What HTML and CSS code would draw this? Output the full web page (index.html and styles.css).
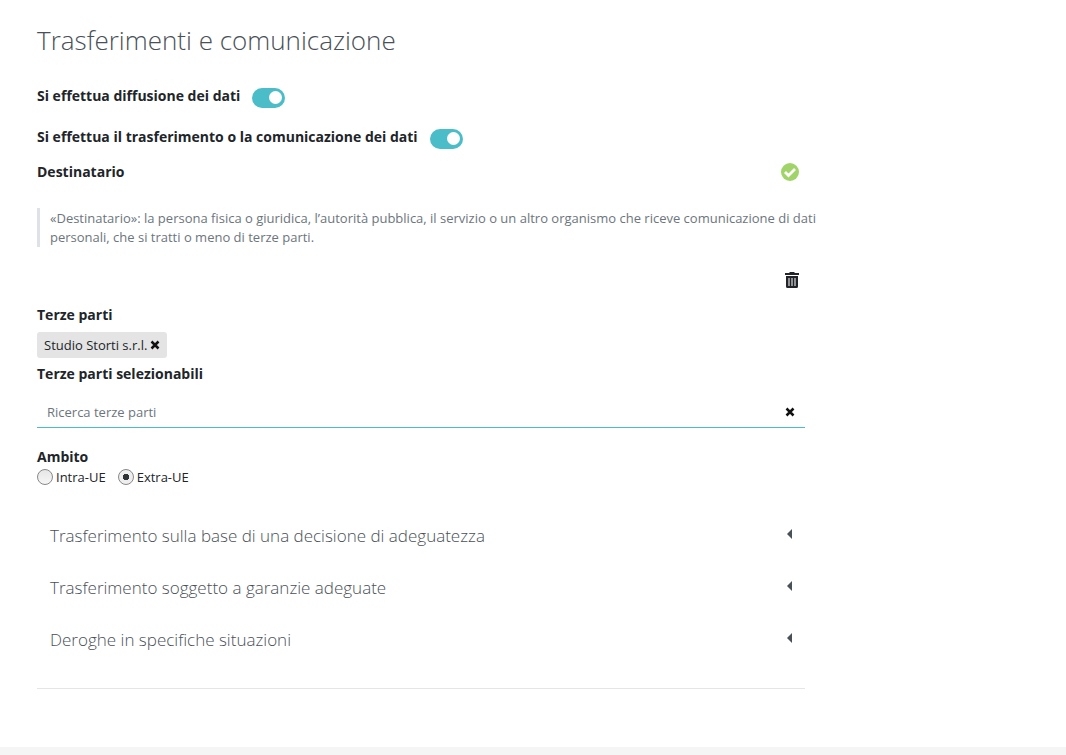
FILE: index.html
```html
<!DOCTYPE html>
<html lang="it">
<head>
    <meta charset="UTF-8">
    <meta name="viewport" content="width=device-width, initial-scale=1.0">
    <title>Trasferimenti e comunicazione</title>
    <link rel="stylesheet" href="styles.css">
</head>
<body>
    <main class="page">
        <form class="content">
            <h1>Trasferimenti e comunicazione</h1>

            <div class="switch-row">
                <label for="diffusione">Si effettua diffusione dei dati</label>
                <input type="checkbox" class="switch" id="diffusione" checked>
            </div>
            <div class="switch-row">
                <label for="trasferimento">Si effettua il trasferimento o la comunicazione dei dati</label>
                <input type="checkbox" class="switch" id="trasferimento" checked>
            </div>

            <!-- Destinatario -->
            <div class="section-head">
                <h2>Destinatario</h2>
                <svg class="icon-ok" viewBox="0 0 18 18" aria-hidden="true"><circle cx="9" cy="9" r="9"/><path d="M4 9l3.500 3.500 6.500-6.500"/></svg>
            </div>
            <blockquote>«Destinatario»: la persona fisica o giuridica, l’autorità pubblica, il servizio o un altro organismo che riceve comunicazione di dati personali, che si tratti o meno di terze parti.</blockquote>

            <div class="actions">
                <button type="button" class="icon-btn" aria-label="Elimina">
                    <svg class="icon-trash" viewBox="0 0 14 16"><path fill-rule="evenodd" d="M0 1h4l1-1h4l1 1h4v2H0zM1 4h12v10.500a1.500 1.500 0 0 1-1.500 1.500h-9A1.500 1.500 0 0 1 1 14.500zM3.500 6v8h1V6zM6.500 6v8h1V6zM9.500 6v8h1V6z"/></svg>
                </button>
            </div>

            <!-- Terze parti -->
            <h2>Terze parti</h2>
            <div class="tags">
                <span class="tag">Studio Storti s.r.l.
                    <button type="button" class="icon-btn" aria-label="Rimuovi">
                        <svg class="icon-x" viewBox="0 0 10 10"><path d="M1.500 1.500l7 7M8.500 1.500l-7 7"/></svg>
                    </button>
                </span>
            </div>
            <label class="field-label" for="ricerca">Terze parti selezionabili</label>
            <div class="search">
                <input type="text" id="ricerca" placeholder="Ricerca terze parti">
                <button type="button" class="icon-btn" aria-label="Cancella">
                    <svg class="icon-x" viewBox="0 0 10 10"><path d="M1.500 1.500l7 7M8.500 1.500l-7 7"/></svg>
                </button>
            </div>

            <!-- Ambito -->
            <fieldset>
                <legend>Ambito</legend>
                <div class="radios">
                    <label><input type="radio" name="ambito"> Intra-UE</label>
                    <label><input type="radio" name="ambito" checked> Extra-UE</label>
                </div>
            </fieldset>

            <div class="accordion">
                <button type="button">Trasferimento sulla base di una decisione di adeguatezza <span class="caret"></span></button>
                <button type="button">Trasferimento soggetto a garanzie adeguate <span class="caret"></span></button>
                <button type="button">Deroghe in specifiche situazioni <span class="caret"></span></button>
            </div>
            <hr>
        </form>
    </main>
</body>
</html>
```
FILE: styles.css
```css
* {
    box-sizing: border-box;
}

body {
    margin: 0;
    min-height: 100vh;
    background: #f5f5f5;
    color: #212529;
    font-family: "Open Sans", sans-serif;
    font-size: 13px;
    line-height: 20px;
}

button,
input {
    font: inherit;
    color: inherit;
}

.page {
    background: #fff;
    padding: 21px 37px 58px;
}

.content {
    max-width: 768px;
}

h1 {
    margin: 0 0 27px;
    font-size: 26px;
    font-weight: 300;
    line-height: 38px;
    color: #495057;
}

h2,
legend,
.field-label,
.switch-row label {
    margin: 0;
    padding: 0;
    font-size: 14px;
    font-weight: 700;
    line-height: 20px;
}

.switch-row {
    display: flex;
    align-items: flex-start;
    gap: 12px;
    height: 20px;
    margin-bottom: 21px;
}

.switch-row + .section-head {
    margin-top: -6px;
}

.switch {
    appearance: none;
    width: 33px;
    height: 20px;
    margin: 2px 0 0;
    padding: 3px;
    border-radius: 10px;
    background: #ccc;
}

.switch::before {
    content: "";
    display: block;
    width: 13px;
    height: 13px;
    border-radius: 50%;
    background: #fff;
}

.switch:checked {
    background: #4bbdc9;
}

.switch:checked::before {
    margin-left: 14px;
}

.section-head {
    display: flex;
    justify-content: space-between;
    align-items: center;
    padding-right: 6px;
}

.icon-ok {
    width: 18px;
    height: 18px;
    fill: #a0d468;
}

.icon-ok path {
    fill: none;
    stroke: #fff;
    stroke-width: 2.8;
}

/* the quote may run a little past the column */
blockquote {
    margin: 26px -16px 0 0;
    padding: 1px 0 0 10px;
    border-left: 3px solid #dee2e6;
    color: #6c757d;
    line-height: 19px;
}

.actions {
    display: flex;
    justify-content: flex-end;
    margin: 25px 6px 17px 0;
}

.icon-btn {
    display: flex;
    padding: 0;
    border: 0;
    background: none;
    cursor: pointer;
}

.icon-trash {
    width: 14px;
    height: 16px;
    fill: #212529;
}

.icon-x {
    width: 10px;
    height: 10px;
    fill: none;
    stroke: #111;
    stroke-width: 2.5;
}

.tags {
    display: flex;
    margin: 7px 0 6px;
}

.tag {
    display: flex;
    align-items: center;
    gap: 3px;
    height: 26px;
    padding: 0 7px;
    border-radius: 3px;
    background: #e4e4e4;
}

.field-label {
    display: block;
}

.search {
    display: flex;
    align-items: center;
    margin-top: 13px;
    padding: 0 10px;
    border-bottom: 1px solid #4bbdc9;
}

.search input {
    flex: 1;
    height: 30px;
    padding: 0;
    border: 0;
    outline: 0;
    background: none;
}

.search input::placeholder {
    color: #6c757d;
    opacity: 1;
}

fieldset {
    margin: 19px 0 0;
    padding: 0;
    border: 0;
}

.radios {
    display: flex;
    gap: 12px;
}

.radios label {
    display: flex;
    align-items: center;
    gap: 3px;
}

.radios input {
    appearance: none;
    width: 16px;
    height: 16px;
    margin: 0;
    border: 1px solid #888;
    border-radius: 50%;
    background: linear-gradient(#e6e6e6, #f6f6f6);
}

.radios input:checked {
    background: radial-gradient(circle, #2e3436 0 3px, #eee 3px);
}

.accordion {
    margin-top: 23px;
}

.accordion button {
    display: flex;
    justify-content: space-between;
    align-items: center;
    width: 100%;
    height: 52px;
    padding: 0 13px;
    border: 0;
    background: none;
    color: #495057;
    font-size: 17px;
    font-weight: 300;
    text-align: left;
    cursor: pointer;
}

.caret {
    margin-bottom: 4px;
    border: 5px solid transparent;
    border-right-color: #495057;
    border-left: 0;
}

hr {
    margin: 22px 0 0;
    border: 0;
    border-top: 1px solid #e5e5e5;
}
```
